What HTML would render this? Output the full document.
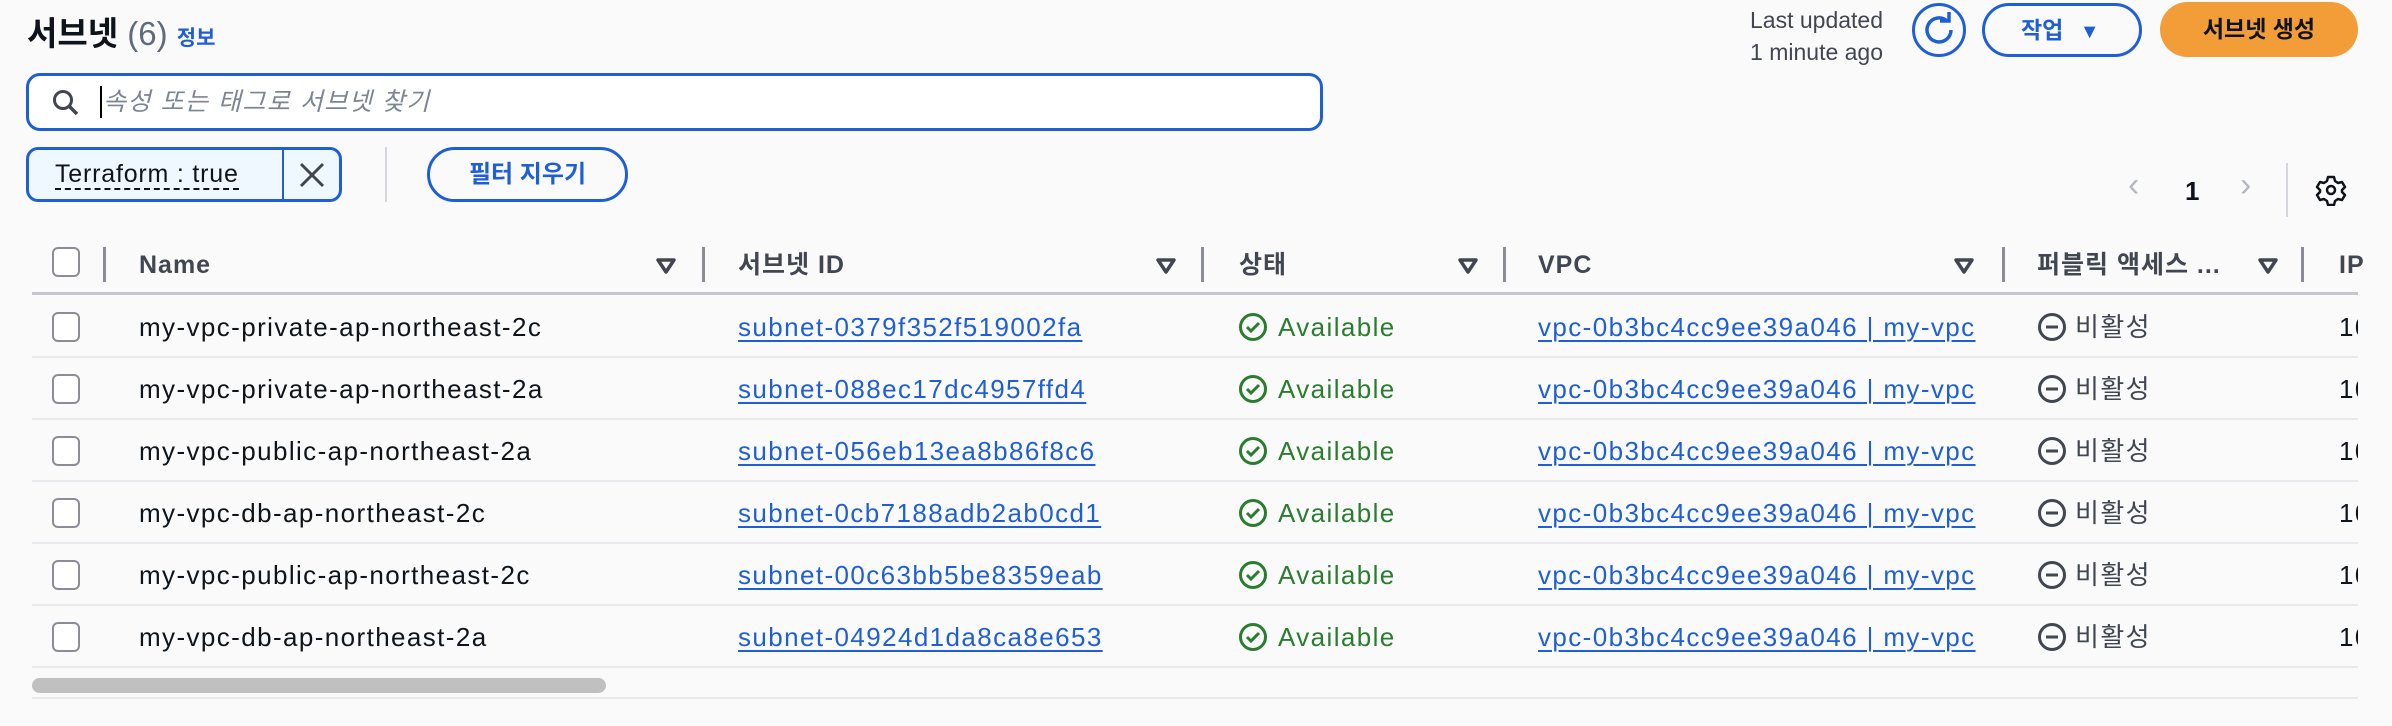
<!DOCTYPE html>
<html><head><meta charset="utf-8"><style>
*{margin:0;padding:0;box-sizing:border-box}
body{width:2392px;height:726px;background:#fafafa;position:relative;overflow:hidden;font-family:"Liberation Sans","Noto Sans CJK KR",sans-serif;color:#0f141a}
.a{position:absolute;white-space:nowrap;line-height:30px}
.h{font-size:25px;font-weight:bold;color:#424650;top:250px;letter-spacing:1px}
.sep{position:absolute;width:3px;background:#8c8c94;top:247px;height:35px}
.tri{position:absolute;top:257px}
.cb{position:absolute;left:52px;width:28px;height:30px;border:2px solid #8c8c94;border-radius:6px;background:#fff}
.row{font-size:26px;letter-spacing:1.4px}
.lk{color:#1f5fd6;text-decoration:underline;text-underline-offset:4px;text-decoration-thickness:2px}
.ok{color:#2a7d2e}
.line{position:absolute;left:32px;width:2326px;height:2px;background:#e8e9ec}
</style></head><body>
<div class="a" style="left:27px;top:14px;font-size:33px;font-weight:bold;line-height:40px">서브넷 <span style="font-weight:normal;color:#5f6b7a">(6)</span> <span style="font-size:21px;color:#1f5fd6;font-weight:bold">정보</span></div>
<div class="a" style="left:1750px;top:4px;font-size:23px;color:#424650;line-height:32px;text-align:right">Last updated<br>1 minute ago</div>
<div class="a" style="left:1912px;top:3px;width:54px;height:54px;border:3px solid #1f5fd6;border-radius:50%"><svg width="48" height="48" viewBox="0 0 48 48" style="position:absolute;left:0;top:0"><path d="M32 15 A12 12 0 1 0 36 24" fill="none" stroke="#1f5fd6" stroke-width="3.5"/><path d="M25 15 L34 15 L34 6" fill="none" stroke="#1f5fd6" stroke-width="3.5"/></svg></div>
<div class="a" style="left:1982px;top:3px;width:160px;height:54px;border:3px solid #1f5fd6;border-radius:27px;color:#1f5fd6;font-size:23px;font-weight:bold;line-height:48px;padding-left:36px">작업 <span style="font-size:20px;margin-left:10px">▼</span></div>
<div class="a" style="left:2160px;top:2px;width:198px;height:55px;background:#f29d38;border-radius:28px;font-size:23px;font-weight:bold;line-height:55px;text-align:center">서브넷 생성</div>
<div class="a" style="left:26px;top:73px;width:1297px;height:58px;border:3px solid #1f5fd6;border-radius:14px;background:#fff">
<svg width="30" height="30" style="position:absolute;left:22px;top:12px"><circle cx="12" cy="12" r="8.5" fill="none" stroke="#424650" stroke-width="3"/><path d="M18 18 L26 26" stroke="#424650" stroke-width="3.5"/></svg>
<div class="a" style="left:71px;top:10px;width:2px;height:32px;background:#000"></div>
<div class="a" style="left:74px;top:11px;font-size:25px;font-style:italic;color:#7d8592;letter-spacing:1.5px">속성 또는 태그로 서브넷 찾기</div></div>
<div class="a" style="left:26px;top:147px;width:316px;height:55px;border:3px solid #1f5fd6;border-radius:12px;background:#f0f8ff">
<div class="a" style="left:26px;top:10px;font-size:25px;border-bottom:2px dashed #0f141a;line-height:28px;letter-spacing:0.8px">Terraform : true</div>
<div class="a" style="left:253px;top:0;width:2px;height:49px;background:#1f5fd6"></div>
<svg class="a" style="left:268px;top:10px" width="30" height="30"><path d="M4 4 L26 26 M26 4 L4 26" stroke="#424650" stroke-width="3"/></svg></div>
<div class="a" style="left:385px;top:147px;width:2px;height:55px;background:#d5d7dc"></div>
<div class="a" style="left:427px;top:147px;width:201px;height:55px;border:3px solid #1f5fd6;border-radius:28px;color:#1f5fd6;font-size:24px;font-weight:bold;text-align:center;line-height:49px">필터 지우기</div>
<div class="a" style="left:2128px;top:170px;font-size:34px;color:#b4b8bf">‹</div>
<div class="a" style="left:2185px;top:176px;font-size:26px;font-weight:bold">1</div>
<div class="a" style="left:2240px;top:170px;font-size:34px;color:#b4b8bf">›</div>
<div class="a" style="left:2286px;top:163px;width:2px;height:54px;background:#d5d7dc"></div>
<svg class="a" style="left:2315px;top:174px" width="32" height="32" viewBox="0 0 32 32"><path d="M13 3h6l1 4 3 2 4-1 3 5-3 3v2l3 3-3 5-4-1-3 2-1 4h-6l-1-4-3-2-4 1-3-5 3-3v-2l-3-3 3-5 4 1 3-2z" fill="none" stroke="#0f141a" stroke-width="2.5" stroke-linejoin="round"/><circle cx="16" cy="16" r="4" fill="none" stroke="#0f141a" stroke-width="2.5"/></svg>

<div class="cb" style="top:247px"></div>
<div class="sep" style="left:103px"></div>
<div class="a h" style="left:139px">Name</div>
<div class="sep" style="left:702px"></div>
<div class="a h" style="left:738px">서브넷 ID</div>
<div class="sep" style="left:1201px"></div>
<div class="a h" style="left:1239px">상태</div>
<div class="sep" style="left:1503px"></div>
<div class="a h" style="left:1538px">VPC</div>
<div class="sep" style="left:2002px"></div>
<div class="a h" style="left:2037px">퍼블릭 액세스 ...</div>
<div class="sep" style="left:2301px"></div>
<div class="a h" style="left:2339px">IP</div>
<svg class="tri" style="left:655px" width="22" height="18"><path d="M3 3h16l-8 12z" fill="none" stroke="#424650" stroke-width="3.5" stroke-linejoin="round"/></svg>
<svg class="tri" style="left:1155px" width="22" height="18"><path d="M3 3h16l-8 12z" fill="none" stroke="#424650" stroke-width="3.5" stroke-linejoin="round"/></svg>
<svg class="tri" style="left:1457px" width="22" height="18"><path d="M3 3h16l-8 12z" fill="none" stroke="#424650" stroke-width="3.5" stroke-linejoin="round"/></svg>
<svg class="tri" style="left:1953px" width="22" height="18"><path d="M3 3h16l-8 12z" fill="none" stroke="#424650" stroke-width="3.5" stroke-linejoin="round"/></svg>
<svg class="tri" style="left:2257px" width="22" height="18"><path d="M3 3h16l-8 12z" fill="none" stroke="#424650" stroke-width="3.5" stroke-linejoin="round"/></svg>
<div class="line" style="top:292px;height:3px;background:#c6c6cd"></div>

<div id="rows"></div>
<script>
var d=[["my-vpc-private-ap-northeast-2c","subnet-0379f352f519002fa"],["my-vpc-private-ap-northeast-2a","subnet-088ec17dc4957ffd4"],["my-vpc-public-ap-northeast-2a","subnet-056eb13ea8b86f8c6"],["my-vpc-db-ap-northeast-2c","subnet-0cb7188adb2ab0cd1"],["my-vpc-public-ap-northeast-2c","subnet-00c63bb5be8359eab"],["my-vpc-db-ap-northeast-2a","subnet-04924d1da8ca8e653"]];
var h="";
d.forEach(function(r,i){var c=327+i*62,t=c-15;
h+='<div class="cb" style="top:'+(c-15)+'px"></div>';
h+='<div class="a row" style="left:139px;top:'+t+'px">'+r[0]+'</div>';
h+='<div class="a row lk" style="left:738px;top:'+t+'px">'+r[1]+'</div>';
h+='<svg class="a" style="left:1238px;top:'+(c-15)+'px" width="30" height="30"><circle cx="15" cy="15" r="12.5" fill="none" stroke="#2a7d2e" stroke-width="3"/><path d="M9 15l4 4 8-8" fill="none" stroke="#2a7d2e" stroke-width="3"/></svg>';
h+='<div class="a row ok" style="left:1278px;top:'+t+'px">Available</div>';
h+='<div class="a row lk" style="left:1538px;top:'+t+'px">vpc-0b3bc4cc9ee39a046 | my-vpc</div>';
h+='<svg class="a" style="left:2037px;top:'+(c-15)+'px" width="30" height="30"><circle cx="15" cy="15" r="12.5" fill="none" stroke="#424650" stroke-width="3"/><path d="M9 15h12" stroke="#424650" stroke-width="3"/></svg>';
h+='<div class="a row" style="left:2075px;top:'+t+'px;color:#424650">비활성</div>';
h+='<div class="a row" style="left:2339px;top:'+t+'px">10</div>';
h+='<div class="line" style="top:'+(c+29)+'px"></div>';});
document.getElementById("rows").innerHTML=h;
</script>
<div class="a" style="left:32px;top:678px;width:574px;height:15px;background:#c0c0c0;border-radius:8px"></div>
<div class="line" style="top:697px"></div>
<div class="a" style="left:2358px;top:290px;width:34px;height:420px;background:#fafafa"></div>
</body></html>
